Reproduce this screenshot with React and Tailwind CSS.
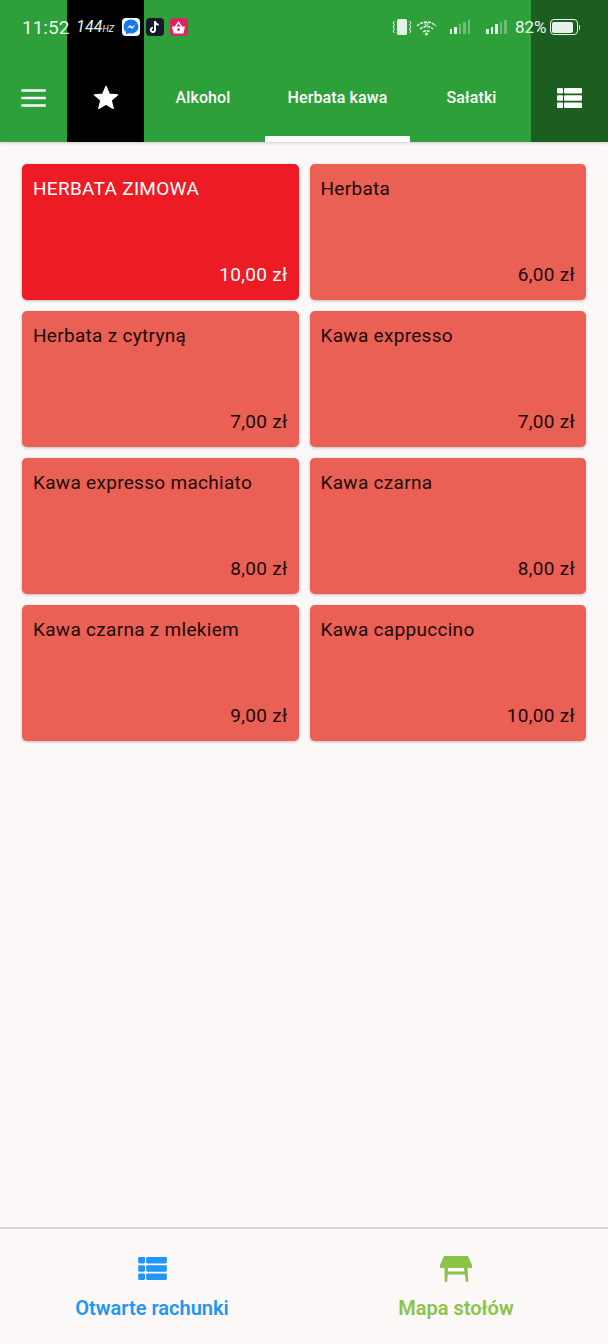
const tabs = [
  { label: 'Alkohol', width: 'w-[121px] pr-[3px]' },
  { label: 'Herbata kawa', width: 'w-[145px]' },
  { label: 'Sałatki', width: 'w-[121px] pl-[2px]' },
]

const products = [
  { name: 'HERBATA ZIMOWA', price: '10,00 zł', special: true },
  { name: 'Herbata', price: '6,00 zł' },
  { name: 'Herbata z cytryną', price: '7,00 zł' },
  { name: 'Kawa expresso', price: '7,00 zł' },
  { name: 'Kawa expresso machiato', price: '8,00 zł' },
  { name: 'Kawa czarna', price: '8,00 zł' },
  { name: 'Kawa czarna z mlekiem', price: '9,00 zł' },
  { name: 'Kawa cappuccino', price: '10,00 zł' },
]

function ListIcon({ className }) {
  return (
    <svg viewBox="0 0 25 20" className={className} fill="currentColor">
      <rect x="0" y="0" width="6" height="5.6" rx="1" />
      <rect x="7" y="0" width="18" height="5.6" rx="1" />
      <rect x="0" y="7.2" width="6" height="5.6" rx="1" />
      <rect x="7" y="7.2" width="18" height="5.6" rx="1" />
      <rect x="0" y="14.4" width="6" height="5.6" rx="1" />
      <rect x="7" y="14.4" width="18" height="5.6" rx="1" />
    </svg>
  )
}

function TableIcon({ className }) {
  return (
    <svg viewBox="0 0 32 26" className={className} fill="currentColor">
      <path d="M4 0h24l4 9v3H0V9z" />
      <path d="M4.500 12h3.500l-.7 12.800a1.300 1.300 0 0 1-2.600 0zM24 12h3.500l.8 12.800a1.300 1.300 0 0 1-2.600 0z" />
      <rect x="7" y="15.500" width="18" height="3" />
    </svg>
  )
}

function Signal({ bars }) {
  return (
    <div className="flex h-[14px] items-end gap-[2px]">
      {[5, 7, 10, 12, 14].map((h, i) => (
        <div
          key={i}
          className={i < bars ? 'w-[2.500px] bg-[#e6f2e6]' : 'w-[2.500px] bg-[#6fbd76]'}
          style={{ height: h }}
        />
      ))}
    </div>
  )
}

function StatusBar() {
  return (
    <div className="absolute left-0 right-0 top-0 flex h-[54px] items-center pl-[22px] pr-[28px] text-[#eef6ee]">
      <span className="text-[19px] leading-none">11:52</span>
      <span className="ml-[7px] text-[16px] italic leading-none">
        144<span className="text-[9px]">HZ</span>
      </span>
      <div className="ml-[8px] flex items-center gap-[6px]">
        <div className="flex h-[18px] w-[18px] items-center justify-center rounded-[4px] bg-white">
          <svg viewBox="0 0 14 14" className="h-[16px] w-[16px]">
            <path d="M7 .5C3.300.5.500 3.200.500 6.700c0 1.900.8 3.500 2.100 4.600v2.200l2-1.100c.7.2 1.500.3 2.400.3 3.700 0 6.500-2.700 6.500-6S10.700.5 7 .5z" fill="#1877f2" />
            <path d="M3.200 8.700 6 5.200l1.800 1.600 3-1.600-2.800 3.500-1.800-1.600z" fill="#fff" />
          </svg>
        </div>
        <div className="flex h-[18px] w-[18px] items-center justify-center rounded-[4px] bg-[#17182a]">
          <svg viewBox="0 0 12 14" className="h-[15px] w-[13px]">
            <path d="M6.500 1v8.200a2 2 0 1 1-2-2" fill="none" stroke="#fff" strokeWidth="1.800" />
            <path d="M6.500 1.500c.4 1.700 1.700 2.800 3.500 2.900" fill="none" stroke="#fff" strokeWidth="1.800" />
          </svg>
        </div>
        <div className="flex h-[18px] w-[18px] items-center justify-center rounded-[4px] bg-[#dd2460]">
          <svg viewBox="0 0 14 14" className="h-[15px] w-[15px]">
            <path d="M1 6h12l-1.400 6.500H2.400z" fill="#fff" />
            <path d="M4 6.500 7 2l3 4.500" fill="none" stroke="#fff" strokeWidth="1.300" />
            <circle cx="7" cy="9" r="1.300" fill="#dd2460" />
          </svg>
        </div>
      </div>
      <div className="ml-auto flex items-center">
        <svg viewBox="0 0 20 18" className="h-[18px] w-[20px]" fill="none" stroke="#eef6ee" strokeWidth="1">
          <rect x="5" y="1" width="10" height="16" rx="1.500" fill="#e6f2e6" stroke="none" />
          <path d="M2.500 3 1 5l1.500 2L1 9l1.500 2L1 13l1.500 2M17.500 3 19 5l-1.500 2L19 9l-1.500 2 1.500 2-1.500 2" />
        </svg>
        <svg viewBox="0 0 22 18" className="ml-[4px] h-[18px] w-[22px]" fill="none" stroke="#eef6ee" strokeWidth="1.500">
          <path d="M1 8c5.500-5.300 13.500-5.300 19 0M4 11c3.700-3.400 9.300-3.400 13 0M7 14c2.200-1.800 5-1.800 7 0" strokeDasharray="3 1" />
          <circle cx="10.500" cy="16" r="1.500" fill="#eef6ee" stroke="none" />
          <circle cx="10.500" cy="6" r="1.500" stroke="#eef6ee" strokeWidth="1" />
        </svg>
        <div className="ml-[12px]">
          <Signal bars={2} />
        </div>
        <div className="ml-[16px]">
          <Signal bars={3} />
        </div>
        <span className="ml-[8px] text-[17px] leading-none">82%</span>
        <div className="ml-[3px] flex items-center">
          <div className="flex h-[16px] w-[28px] items-center rounded-[4px] border-[1.500px] border-[#eef6ee] p-[1.500px]">
            <div className="h-full w-[21px] rounded-[2px] bg-[#e6f2e6]" />
          </div>
          <div className="ml-[1px] h-[5px] w-[1.500px] rounded-r bg-[#eef6ee]" />
        </div>
      </div>
    </div>
  )
}

export default function App() {
  return (
    <div className="flex h-[1344px] flex-col bg-[#fcf8f7] font-['Roboto',sans-serif]">
      <header className="relative z-10 flex h-[142px] shrink-0 bg-[#2da039] text-white shadow-[0_1px_3px_rgba(0,0,0,0.18)]">
        <div className="flex w-[67px] items-center justify-center pt-[54px]">
          <svg viewBox="0 0 25 18" className="h-[18px] w-[25px]" fill="none" stroke="currentColor" strokeWidth="2.400" strokeLinecap="round">
            <path d="M1.200 1.500h22.600M1.200 9h22.600M1.200 16.500h22.600" />
          </svg>
        </div>
        <div className="flex w-[77px] items-center justify-center bg-black pt-[54px]">
          <svg viewBox="0 0 24 24" className="h-[28px] w-[28px]" fill="white" stroke="white" strokeWidth="1" strokeLinejoin="round">
            <path d="M12 17.270 18.180 21l-1.640-7.030L22 9.240l-7.190-.61L12 2 9.190 8.630 2 9.240l5.460 4.730L5.820 21z" />
          </svg>
        </div>
        <nav className="flex flex-1 justify-center">
          {tabs.map((tab, i) => (
            <div key={tab.label} className={`relative flex items-center justify-center pt-[54px] text-[16px] font-medium tracking-[0.1px] ${tab.width}`}>
              {tab.label}
              {i === 1 && <div className="absolute bottom-0 left-0 right-0 h-[6px] bg-white" />}
            </div>
          ))}
        </nav>
        <div className="flex w-[77px] items-center justify-center bg-[#1b5e20] pt-[54px]">
          <ListIcon className="h-[20px] w-[25px]" />
        </div>
        <StatusBar />
      </header>

      <main className="grid flex-1 grid-cols-2 content-start gap-[11px] px-[22px] pt-[22px]">
        {products.map((item) => (
          <div
            key={item.name}
            className={`flex h-[136px] flex-col justify-between rounded-[5px] px-[11px] py-[14px] text-[19px] leading-[22px] tracking-[0.3px] shadow-[0_1px_3px_rgba(0,0,0,0.25)] ${
              item.special ? 'bg-[#ed1c24] text-white' : 'bg-[#eb6055] text-[#1a0a08]'
            }`}
          >
            <span>{item.name}</span>
            <span className="text-right">{item.price}</span>
          </div>
        ))}
      </main>

      <footer className="flex h-[117px] shrink-0 border-t-2 border-[#d8d6d5]">
        <div className="flex flex-1 flex-col items-center pt-[28px] text-[#2196f3]">
          <ListIcon className="h-[23px] w-[29px]" />
          <span className="mt-[16px] text-[20px] font-semibold leading-[24px]">Otwarte rachunki</span>
        </div>
        <div className="flex flex-1 flex-col items-center pt-[27px] text-[#8bc34a]">
          <TableIcon className="h-[26px] w-[32px]" />
          <span className="mt-[14px] text-[20px] font-semibold leading-[24px]">Mapa stołów</span>
        </div>
      </footer>
    </div>
  )
}
